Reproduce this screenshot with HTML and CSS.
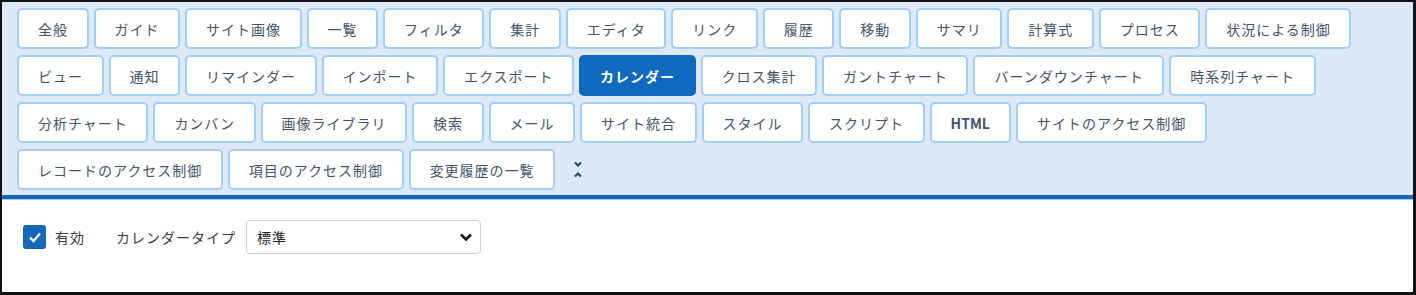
FILE: index.html
```html
<!DOCTYPE html>
<html lang="ja">
<head>
    <meta charset="UTF-8">
    <meta name="viewport" content="width=device-width, initial-scale=1.0">
    <title>サイトの管理 - カレンダー</title>
    <link rel="stylesheet" href="styles.css">
</head>
<body>
    <div class="frame">
        <div class="tabs">
            <button class="tab">全般</button>
            <button class="tab">ガイド</button>
            <button class="tab">サイト画像</button>
            <button class="tab">一覧</button>
            <button class="tab">フィルタ</button>
            <button class="tab">集計</button>
            <button class="tab">エディタ</button>
            <button class="tab">リンク</button>
            <button class="tab">履歴</button>
            <button class="tab">移動</button>
            <button class="tab">サマリ</button>
            <button class="tab">計算式</button>
            <button class="tab">プロセス</button>
            <button class="tab">状況による制御</button>
            <button class="tab">ビュー</button>
            <button class="tab">通知</button>
            <button class="tab">リマインダー</button>
            <button class="tab">インポート</button>
            <button class="tab">エクスポート</button>
            <button class="tab active">カレンダー</button>
            <button class="tab">クロス集計</button>
            <button class="tab">ガントチャート</button>
            <button class="tab">バーンダウンチャート</button>
            <button class="tab">時系列チャート</button>
            <button class="tab">分析チャート</button>
            <button class="tab">カンバン</button>
            <button class="tab">画像ライブラリ</button>
            <button class="tab">検索</button>
            <button class="tab">メール</button>
            <button class="tab">サイト統合</button>
            <button class="tab">スタイル</button>
            <button class="tab">スクリプト</button>
            <button class="tab latin">HTML</button>
            <button class="tab">サイトのアクセス制御</button>
            <button class="tab">レコードのアクセス制御</button>
            <button class="tab">項目のアクセス制御</button>
            <button class="tab">変更履歴の一覧</button>
            <span class="collapse">
                <svg width="8" height="17" viewBox="0 0 8 17">
                    <polyline points="1,1.5 4,4.5 7,1.5" fill="none" stroke="#23416b" stroke-width="2"/>
                    <polyline points="1,15.5 4,12.5 7,15.5" fill="none" stroke="#23416b" stroke-width="2"/>
                </svg>
            </span>
        </div>

        <div class="content">
            <label class="check">
                <span class="box">
                    <svg width="16" height="16" viewBox="0 0 16 16">
                        <polyline points="3,8.5 6.5,12 13,4.5" fill="none" stroke="#fff" stroke-width="2.4"/>
                    </svg>
                </span>
                <span>有効</span>
            </label>
            <span class="field-label">カレンダータイプ</span>
            <div class="select">
                <span>標準</span>
                <svg width="14" height="10" viewBox="0 0 14 10">
                    <polyline points="2,2.5 7,7.5 12,2.5" fill="none" stroke="#111" stroke-width="2.6"/>
                </svg>
            </div>
        </div>
    </div>
</body>
</html>
```

FILE: styles.css
```css
body {
    margin: 0;
    padding: 0;
    font-family: "Noto Sans CJK JP", "Noto Sans", sans-serif;
    background-color: #fff;
}
.frame {
    width: 1416px;
    height: 295px;
    box-sizing: border-box;
    border: 2px solid #111;
    border-right-width: 3px;
    border-bottom-width: 3px;
    background-color: #fff;
}
.tabs {
    display: flex;
    flex-wrap: wrap;
    align-items: center;
    gap: 6px 5px;
    padding: 6px 15px 5px 15px;
    background-color: #dde9f7;
    border-bottom: 4px solid #1565b8;
    box-shadow: 0 1px 0 #a9cdf0;
}
.tab {
    height: 41px;
    padding: 0 18.5px 0 19px;
    box-sizing: border-box;
    background-color: #fff;
    border: 2px solid #a3cff7;
    border-radius: 5px;
    color: #44546c;
    font-family: inherit;
    font-size: 14px;
    letter-spacing: 1px;
    line-height: 1;
    cursor: pointer;
}
.tab.latin {
    font-weight: bold;
    letter-spacing: 0;
    padding: 0 19px;
}
.tab.active {
    background-color: #0f69bd;
    border-color: #0f69bd;
    color: #fff;
    font-weight: bold;
}
.collapse {
    display: flex;
    align-items: center;
    margin-left: 14px;
    height: 41px;
}
.content {
    display: flex;
    align-items: center;
    padding: 21px 21px;
    color: #3b3b3b;
    font-size: 14px;
    letter-spacing: 1px;
}
.check {
    display: flex;
    align-items: center;
    gap: 9px;
}
.box {
    width: 23px;
    height: 24px;
    border-radius: 3px;
    background-color: #1666b9;
    display: flex;
    align-items: center;
    justify-content: center;
}
.field-label {
    margin-left: 31px;
}
.select {
    margin-left: 10px;
    width: 235px;
    height: 34px;
    box-sizing: border-box;
    border: 1px solid #cfcfcf;
    border-radius: 4px;
    display: flex;
    align-items: center;
    justify-content: space-between;
    padding: 0 7px 0 10px;
    color: #222;
}
```
